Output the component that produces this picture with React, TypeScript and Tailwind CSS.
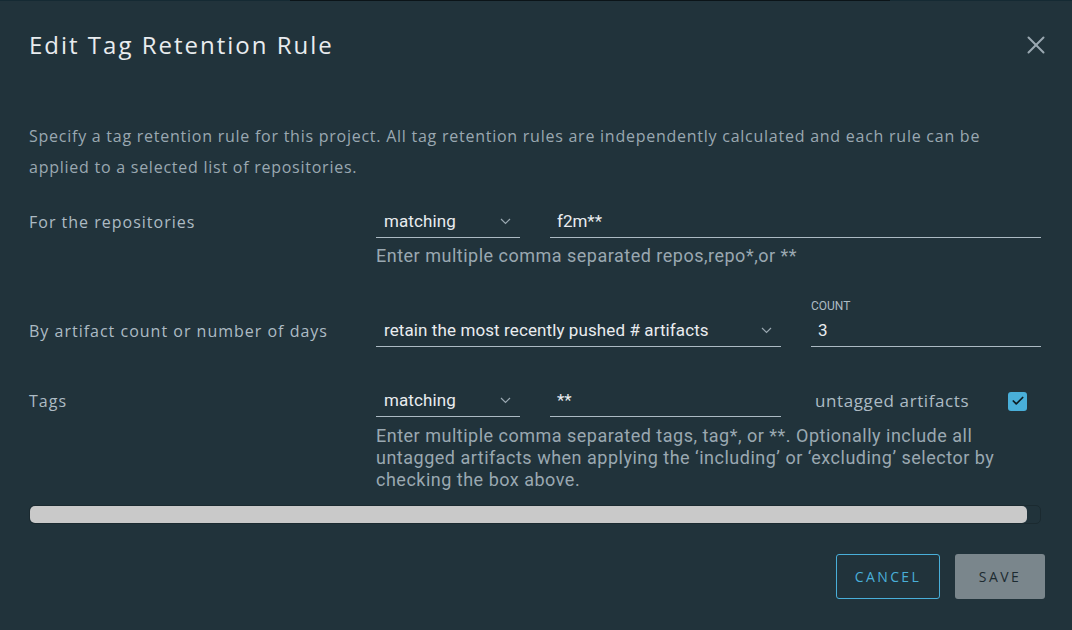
import { X, Check } from "lucide-react";

const Chevron = () => (
  <svg width="11" height="7" viewBox="0 0 11 7" fill="none" className="shrink-0">
    <path d="M1 1l4.5 4.5L10 1" stroke="#9aa8b1" strokeWidth="1.2" />
  </svg>
);

const Select = ({ value, width }: { value: string; width: string }) => (
  <div
    className={`${width} h-[32px] flex items-center justify-between pl-[8px] pr-[9px] border-b border-[#acbac3] text-[17px] text-[#e9ecef] font-['Roboto'] tracking-[0.1px]`}
  >
    <span>{value}</span>
    <Chevron />
  </div>
);

const Input = ({ value, width }: { value: string; width: string }) => (
  <div
    className={`${width} h-[32px] flex items-center pl-[7px] border-b border-[#acbac3] text-[17px] text-[#e9ecef] font-['Roboto']`}
  >
    {value}
  </div>
);

const Helper = ({ children }: { children: React.ReactNode }) => (
  <p className="text-[18px] leading-[22px] text-[#9aa8b1] font-['Roboto'] tracking-[0.5px]">
    {children}
  </p>
);

export default function App() {
  return (
    <div className="w-[1072px] h-[630px] bg-[#21333b] font-['Open_Sans',sans-serif] flex flex-col overflow-hidden">
      {/* top edge */}
      <div className="flex h-px shrink-0">
        <div className="w-[290px] bg-[#152a33]" />
        <div className="w-[600px] bg-[#0b1418]" />
        <div className="flex-1 bg-[#152a33]" />
      </div>

      {/* header */}
      <div className="flex items-center justify-between pl-[29px] pr-[21px] mt-[27px]">
        <h1 className="text-[24px] leading-[34px] text-[#e9ecef] tracking-[2px]">Edit Tag Retention Rule</h1>
        <X size={30} strokeWidth={1.6} className="text-[#9aa8b1]" />
      </div>

      <div className="px-[29px] mt-[59px]">
        <p className="w-[960px] text-[16px] leading-[31px] text-[#9aa8b1] tracking-[0.75px]">
          Specify a tag retention rule for this project. All tag retention rules are independently calculated and each rule can be
          applied to a selected list of repositories.
        </p>

        {/* repositories */}
        <div className="grid grid-cols-[347px_1fr] mt-[23px]">
          <div className="h-[32px] flex items-center text-[16px] text-[#adbbc4] tracking-[1px]">For the repositories</div>
          <div>
            <div className="flex gap-[30px]">
              <Select value="matching" width="w-[144px]" />
              <Input value="f2m**" width="w-[491px]" />
            </div>
            <div className="mt-[7px]">
              <Helper>Enter multiple comma separated repos,repo*,or **</Helper>
            </div>
          </div>
        </div>

        {/* count */}
        <div className="grid grid-cols-[347px_1fr] mt-[31px]">
          <div className="pt-[17px] h-[49px] flex items-end text-[16px] text-[#adbbc4] tracking-[1px]">
            <div className="h-[32px] flex items-center">By artifact count or number of days</div>
          </div>
          <div className="flex gap-[30px] items-end">
            <Select value="retain the most recently pushed # artifacts" width="w-[405px]" />
            <div className="w-[230px]">
              <div className="text-[12px] leading-[17px] text-[#adbbc4] font-['Roboto']">COUNT</div>
              <Input value="3" width="w-full" />
            </div>
          </div>
        </div>

        {/* tags */}
        <div className="grid grid-cols-[347px_1fr] mt-[38px]">
          <div className="h-[32px] flex items-center text-[16px] text-[#adbbc4] tracking-[1px]">Tags</div>
          <div>
            <div className="flex items-center">
              <Select value="matching" width="w-[144px]" />
              <div className="ml-[30px]">
                <Input value="**" width="w-[231px]" />
              </div>
              <span className="ml-[34px] text-[17px] text-[#adbbc4] tracking-[0.6px]">untagged artifacts</span>
              <div className="ml-auto mr-[16px] w-[19px] h-[19px] rounded-[3px] bg-[#49afd9] flex items-center justify-center">
                <Check size={14} strokeWidth={3} className="text-[#0d1c22]" />
              </div>
            </div>
            <div className="mt-[8px] w-[630px]">
              <Helper>
                Enter multiple comma separated tags, tag*, or **. Optionally include all untagged artifacts when applying the ‘including’ or ‘excluding’ selector by checking the box above.
              </Helper>
            </div>
          </div>
        </div>

        {/* scrollbar */}
        <div className="mt-[14px] h-[19px] w-[1012px] rounded-[5px] border border-[#1b2a30] flex">
          <div className="w-[997px] h-full rounded-[5px] bg-[#c9c9c9]" />
        </div>
      </div>

      {/* footer */}
      <div className="flex justify-end gap-[15px] pr-[27px] mt-[30px]">
        <button className="w-[104px] h-[45px] rounded-[3px] border border-[#49afd9] text-[#49afd9] text-[14px] font-medium tracking-[2.4px]">
          CANCEL
        </button>
        <button className="w-[90px] h-[45px] rounded-[3px] bg-[#7a868c] text-[#1d2b31] text-[14px] font-medium tracking-[2.4px]">
          SAVE
        </button>
      </div>
    </div>
  );
}
